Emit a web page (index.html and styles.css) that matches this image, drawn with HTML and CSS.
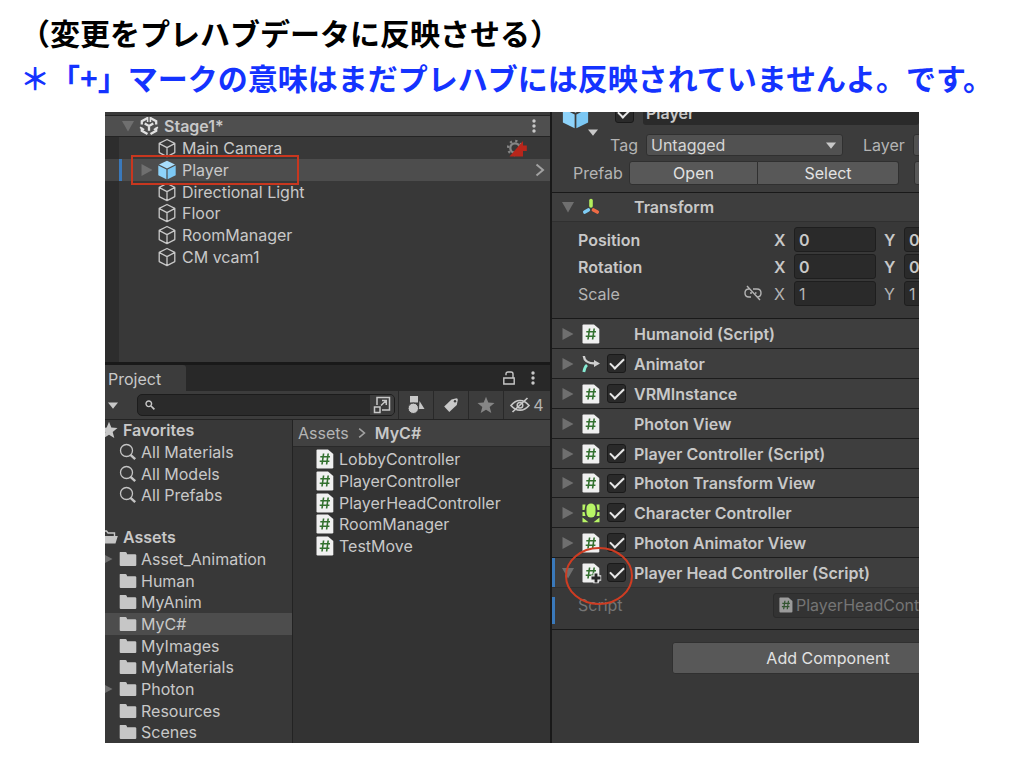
FILE: index.html
```html
<!DOCTYPE html>
<html lang="ja">
<head>
<meta charset="utf-8">
<title>プレハブデータへの反映</title>
<link rel="stylesheet" href="styles.css">
</head>
<body>
<svg class="sprite" aria-hidden="true">
  <symbol id="cube" viewBox="0 0 20 20"><path d="M10 1.5 17.8 5.4V14.6L10 18.6 2.2 14.6V5.4ZM2.4 5.6 10 9.6 17.6 5.6M10 9.6V18.4" fill="none" stroke="#c8c8c8" stroke-width="1.3" stroke-linejoin="round"/></symbol>
  <symbol id="prefab" viewBox="0 0 20 20"><path d="M10 .8 18 4.4 10 8.4 2 4.4Z" fill="#a9defc"/><path d="M1.3 5.6 9.4 9.6V19.2L1.3 15.2Z" fill="#8ed3fa"/><path d="M18.7 5.6 10.6 9.6V19.2L18.7 15.2Z" fill="#7cc8f4"/></symbol>
  <symbol id="down" viewBox="0 0 12 12" preserveAspectRatio="none"><path d="M0 1H12L6 11.5Z" fill="currentColor"/></symbol>
  <symbol id="right" viewBox="0 0 12 12"><path d="M.5 0 11.5 6 .5 12Z" fill="currentColor"/></symbol>
  <symbol id="dots" viewBox="0 0 4 14"><circle cx="2" cy="2" r="1.7" fill="#c8c8c8"/><circle cx="2" cy="7" r="1.7" fill="#c8c8c8"/><circle cx="2" cy="12" r="1.7" fill="#c8c8c8"/></symbol>
  <symbol id="script" viewBox="0 0 18 20"><path d="M1.5.5H12L17.3 5V18.3Q17.3 19.5 16 19.5H1.7Q.5 19.5.5 18.3V1.6Q.5.5 1.5.5Z" fill="#f0f0f0"/><path d="M7.6 4.5 6 15.5M12.2 4.5 10.6 15.5M4.3 7.8H14M3.7 12.2H13.4" stroke="#33712f" stroke-width="1.6" fill="none"/></symbol>
  <symbol id="folder" viewBox="0 0 18 16"><path d="M1 1H6.5Q7.3 1 7.6 1.8L8.2 3.2H16Q17.3 3.2 17.3 4.3V14Q17.3 15 16.3 15H1.8Q.7 15 .7 14V1.5Z" fill="#c6c6c6"/></symbol>
  <symbol id="lens" viewBox="0 0 18 18"><circle cx="7.5" cy="7.5" r="6" fill="none" stroke="#c4c4c4" stroke-width="1.3"/><path d="M11.5 11.8 16.2 16.2" stroke="#c4c4c4" stroke-width="2.4"/></symbol>
  <symbol id="star" viewBox="0 0 18 18"><path d="M9 .8 11.3 6.6 17.5 7 12.7 11 14.3 17 9 13.7 3.7 17 5.3 11 .5 7 6.7 6.6Z" fill="currentColor"/></symbol>
  <symbol id="chevron" viewBox="0 0 10 14"><path d="M1.5 1.5 8 7 1.5 12.5" fill="none" stroke="#a2a2a2" stroke-width="2"/></symbol>
</svg>

<header class="notes">
  <h1 class="note">（変更をプレハブデータに反映させる）</h1>
  <p class="note note-blue">＊「+」マークの意味はまだプレハブには反映されていませんよ。です。</p>
</header>

<main class="editor">
  <div class="left">
    <section class="hierarchy" aria-label="Hierarchy">
      <div class="scene">
        <button class="fold" aria-label="Collapse Stage1"><svg class="i12"><use href="#down"/></svg></button>
        <svg class="i20" viewBox="0 0 20 20"><g fill="none" stroke="#e2e2e2" stroke-width="2.3"><path d="M8.6 2 2.8 5.2V8.5M11.4 2 17.2 5.2V8.5M2.8 11.8V14.8L8.5 18M17.2 11.8V14.8L11.5 18M10 10V14.8M10 10 5.7 7.6M10 10 14.3 7.6"/><path d="M8.6 1V6M11.4 1V6M1 11.2 5.2 13.7M19 11.2 14.8 13.7" stroke-width="1.6"/></g></svg>
        <span class="scene-name">Stage1*</span>
        <button class="menu" aria-label="Scene menu"><svg class="dots"><use href="#dots"/></svg></button>
      </div>
      <ul class="objects">
        <li class="object"><svg class="i20"><use href="#cube"/></svg>Main Camera
          <svg class="gear" viewBox="0 0 21 19"><circle cx="8" cy="9" r="4.7" fill="none" stroke="#858585" stroke-width="2.3"/><circle cx="8" cy="9" r="7" fill="none" stroke="#858585" stroke-width="2.4" stroke-dasharray="2.2 3.3"/><path d="M2.5 17.5 16 2V6.5H19.8V12H16V17.5Z" fill="#b8261b"/></svg></li>
        <li class="object selected"><button class="fold" aria-label="Expand Player"><svg class="i12"><use href="#right"/></svg></button><svg class="i20"><use href="#prefab"/></svg>Player
          <svg class="open"><use href="#chevron"/></svg><span class="callout-box"></span></li>
        <li class="object"><svg class="i20"><use href="#cube"/></svg>Directional Light</li>
        <li class="object"><svg class="i20"><use href="#cube"/></svg>Floor</li>
        <li class="object"><svg class="i20"><use href="#cube"/></svg>RoomManager</li>
        <li class="object"><svg class="i20"><use href="#cube"/></svg>CM vcam1</li>
      </ul>
    </section>

    <section class="project" aria-label="Project">
      <div class="tabs">
        <button class="tab">Project</button>
        <button class="menu lock" aria-label="Lock"><svg class="i14" viewBox="0 0 14 14"><path d="M1.8 7H12.2V13H1.8ZM4 4.2V3Q4 1 6 1H9Q11 1 11 3V7" fill="none" stroke="#c8c8c8" stroke-width="1.4"/></svg></button>
        <button class="menu" aria-label="Project menu"><svg class="dots"><use href="#dots"/></svg></button>
      </div>
      <div class="toolbar">
        <button class="create" aria-label="Create"><svg class="caret"><use href="#down"/></svg></button>
        <div class="search">
          <svg class="i10" viewBox="0 0 10 10"><circle cx="3.8" cy="3.8" r="2.8" fill="none" stroke="#c8c8c8" stroke-width="1.4"/><path d="M6 6 9.4 9.4" stroke="#c8c8c8" stroke-width="1.7"/></svg>
          <input class="search-input" type="text" aria-label="Search project">
          <button class="search-mode" aria-label="Open search"><svg class="i18" viewBox="0 0 18 18"><path d="M4 9V1.5H16.5V14H9M1.5 11H7V16.5H1.5ZM8 9.5 13 4.7M9 4.5H13.3V9" fill="none" stroke="#c8c8c8" stroke-width="1.5"/></svg></button>
        </div>
        <button class="tool" aria-label="Search by type"><svg class="i18" viewBox="0 0 18 18"><path d="M3 0H11V6.5H3ZM12.5 5 17.5 13H12Z" fill="#c8c8c8"/><circle cx="6.3" cy="12.3" r="5.2" fill="#c8c8c8" stroke="#3c3c3c"/></svg></button>
        <button class="tool" aria-label="Search by label"><svg class="i16" viewBox="0 0 16 16"><path d="M8.5 2.5 13.5 1.2Q15 1.2 14.8 3L13.8 8 6.3 15 1.2 9.5Z" fill="#c8c8c8"/><circle cx="12" cy="4.3" r="1.2" fill="#3c3c3c"/></svg></button>
        <button class="tool dim" aria-label="Favorite search"><svg class="i18"><use href="#star"/></svg></button>
        <button class="tool hidden-count"><svg class="eye" viewBox="0 0 20 16"><path d="M1 8.5Q5 3.5 10 3.5T19 8.5Q15 13.2 10 13.2T1 8.5ZM2.5 15 17.5 1" fill="none" stroke="#c8c8c8" stroke-width="1.7"/><circle cx="10" cy="8.3" r="2.8" fill="none" stroke="#c8c8c8" stroke-width="1.5"/></svg>4</button>
      </div>
      <div class="browser">
        <div class="tree-pane">
          <ul class="tree">
            <li class="root"><svg class="i18"><use href="#star"/></svg>Favorites</li>
            <li class="leaf"><svg class="i18"><use href="#lens"/></svg>All Materials</li>
            <li class="leaf"><svg class="i18"><use href="#lens"/></svg>All Models</li>
            <li class="leaf"><svg class="i18"><use href="#lens"/></svg>All Prefabs</li>
          </ul>
          <ul class="tree">
            <li class="root"><svg class="i18" viewBox="0 0 18 16"><path d="M1 13V2H6.5L8 4H14.5V7" fill="none" stroke="#c6c6c6" stroke-width="1.4"/><path d="M3.2 7H17.8L15.5 14.5H.5Z" fill="#c6c6c6"/></svg>Assets</li>
            <li class="leaf"><svg class="branch"><use href="#right"/></svg><svg class="i18"><use href="#folder"/></svg>Asset_Animation</li>
            <li class="leaf"><svg class="i18"><use href="#folder"/></svg>Human</li>
            <li class="leaf"><svg class="i18"><use href="#folder"/></svg>MyAnim</li>
            <li class="leaf current"><svg class="i18"><use href="#folder"/></svg>MyC#</li>
            <li class="leaf"><svg class="i18"><use href="#folder"/></svg>MyImages</li>
            <li class="leaf"><svg class="i18"><use href="#folder"/></svg>MyMaterials</li>
            <li class="leaf"><svg class="branch"><use href="#right"/></svg><svg class="i18"><use href="#folder"/></svg>Photon</li>
            <li class="leaf"><svg class="i18"><use href="#folder"/></svg>Resources</li>
            <li class="leaf"><svg class="i18"><use href="#folder"/></svg>Scenes</li>
          </ul>
        </div>
        <div class="files-pane">
          <nav class="crumbs" aria-label="Path"><a class="crumb" href="#">Assets</a><svg class="crumb-sep"><use href="#chevron"/></svg><b class="crumb-here">MyC#</b></nav>
          <ul class="files">
            <li class="file"><svg class="sc"><use href="#script"/></svg>LobbyController</li>
            <li class="file"><svg class="sc"><use href="#script"/></svg>PlayerController</li>
            <li class="file"><svg class="sc"><use href="#script"/></svg>PlayerHeadController</li>
            <li class="file"><svg class="sc"><use href="#script"/></svg>RoomManager</li>
            <li class="file"><svg class="sc"><use href="#script"/></svg>TestMove</li>
          </ul>
        </div>
      </div>
    </section>
  </div>

  <section class="inspector" aria-label="Inspector">
    <div class="head">
      <div class="name-row">
        <svg class="big-cube"><use href="#prefab"/></svg>
        <input class="check" type="checkbox" checked aria-label="Active">
        <input class="name-input" type="text" value="Player" aria-label="Name">
        <svg class="caret icon-arrow"><use href="#down"/></svg>
      </div>
      <div class="tag-row">
        <label class="tag-label" for="tag">Tag</label>
        <div class="picker"><select class="select" id="tag"><option>Untagged</option></select><svg class="caret picker-arrow"><use href="#down"/></svg></div>
        <label class="layer-label" for="layer">Layer</label>
        <select class="select layer" id="layer"><option>Default</option></select>
      </div>
      <div class="prefab-row">
        <span class="prefab-label">Prefab</span>
        <button class="btn open-btn">Open</button><button class="btn select-btn">Select</button><button class="btn over-btn" aria-label="Overrides"></button>
      </div>
    </div>

    <div class="comp">
      <button class="fold" aria-label="Collapse Transform"><svg class="i12"><use href="#down"/></svg></button>
      <svg class="i18" viewBox="0 0 18 18"><g stroke-width="3.6" stroke-linecap="round"><path d="M9 2.5V8" stroke="#b4ee5c"/><path d="M6.3 12 2.8 14" stroke="#7fcdf5"/><path d="M11.5 12 15.3 14" stroke="#ef6b45"/></g></svg>
      <h2 class="comp-name">Transform</h2>
    </div>
    <div class="transform">
      <div class="vec bold"><span>Position</span><label class="axis" for="px">X</label><input class="num" id="px" value="0"><label class="axis" for="py">Y</label><input class="num" id="py" value="0"></div>
      <div class="vec bold"><span>Rotation</span><label class="axis" for="rx">X</label><input class="num" id="rx" value="0"><label class="axis" for="ry">Y</label><input class="num" id="ry" value="0"></div>
      <div class="vec"><span class="scale-label">Scale<svg class="i18" viewBox="0 0 18 16"><path d="M7 12H5Q1 12 1 8T5 4H6M9 4H13Q17 4 17 8T13 12M6 8H8M11 8H12.5M3 1 16 15" fill="none" stroke="#b4b4b4" stroke-width="1.4"/></svg></span><label class="axis" for="sx">X</label><input class="num" id="sx" value="1"><label class="axis" for="sy">Y</label><input class="num" id="sy" value="1"></div>
    </div>

    <div class="comps">
      <div class="comp"><button class="fold" aria-label="Expand"><svg class="i12"><use href="#right"/></svg></button><svg class="sc"><use href="#script"/></svg><h2 class="comp-name">Humanoid (Script)</h2></div>
      <div class="comp"><button class="fold" aria-label="Expand"><svg class="i12"><use href="#right"/></svg></button><svg class="i18" viewBox="0 0 18 18"><path d="M1.8 1Q2.5 8.5 13 8.5" fill="none" stroke="#cfcfcf" stroke-width="2.4"/><path d="M12 5 18 8.5 12 12Z" fill="#cfcfcf"/><path d="M5 10Q2.5 12 1.8 17" fill="none" stroke="#86ecd4" stroke-width="2.8"/></svg><input class="check" id="c1" type="checkbox" checked><label class="comp-name" for="c1">Animator</label></div>
      <div class="comp"><button class="fold" aria-label="Expand"><svg class="i12"><use href="#right"/></svg></button><svg class="sc"><use href="#script"/></svg><input class="check" id="c2" type="checkbox" checked><label class="comp-name" for="c2">VRMInstance</label></div>
      <div class="comp"><button class="fold" aria-label="Expand"><svg class="i12"><use href="#right"/></svg></button><svg class="sc"><use href="#script"/></svg><h2 class="comp-name">Photon View</h2></div>
      <div class="comp"><button class="fold" aria-label="Expand"><svg class="i12"><use href="#right"/></svg></button><svg class="sc"><use href="#script"/></svg><input class="check" id="c3" type="checkbox" checked><label class="comp-name" for="c3">Player Controller (Script)</label></div>
      <div class="comp"><button class="fold" aria-label="Expand"><svg class="i12"><use href="#right"/></svg></button><svg class="sc"><use href="#script"/></svg><input class="check" id="c4" type="checkbox" checked><label class="comp-name" for="c4">Photon Transform View</label></div>
      <div class="comp"><button class="fold" aria-label="Expand"><svg class="i12"><use href="#right"/></svg></button><svg class="sc" viewBox="0 0 18 20"><rect x="4.5" y=".5" width="9" height="14" rx="4.5" fill="#b8f566"/><path d="M.5 1.5H3.5L2.5 7H.5ZM17.5 1.5H14.5L15.5 7H17.5ZM.5 9H2.5L3.5 13H.5ZM17.5 9H15.5L14.5 13H17.5ZM.5 14.5 6.5 19.3H.5ZM17.5 14.5 11.5 19.3H17.5Z" fill="#b8f566"/></svg><input class="check" id="c5" type="checkbox" checked><label class="comp-name" for="c5">Character Controller</label></div>
      <div class="comp"><button class="fold" aria-label="Expand"><svg class="i12"><use href="#right"/></svg></button><svg class="sc"><use href="#script"/></svg><input class="check" id="c6" type="checkbox" checked><label class="comp-name" for="c6">Photon Animator View</label></div>
      <div class="comp added"><button class="fold" aria-label="Collapse"><svg class="i12"><use href="#down"/></svg></button><svg class="sc"><use href="#script"/></svg><input class="check" id="c7" type="checkbox" checked><label class="comp-name" for="c7">Player Head Controller (Script)</label>
        <svg class="plus" viewBox="0 0 12 12"><path d="M6 .8V11.2M.8 6H11.2" stroke="#e6e6e6" stroke-width="5.4"/><path d="M6 1.5V10.5M1.5 6H10.5" stroke="#262626" stroke-width="2.8"/></svg>
        <svg class="callout-ring" viewBox="0 0 70 60"><ellipse cx="35" cy="30" rx="33" ry="28" fill="none" stroke="#cf3c22" stroke-width="2"/></svg></div>
    </div>
    <div class="script-body">
      <span class="script-label">Script</span>
      <div class="script-field"><svg class="sc-small"><use href="#script"/></svg>PlayerHeadController</div>
    </div>
    <div class="foot"><button class="btn add-btn">Add Component</button></div>
  </section>
</main>
</body>
</html>
```
FILE: styles.css
```css
* { box-sizing: border-box; }
body { margin: 0; background: #fff; font-family: Inter, "Noto Sans", sans-serif; font-size: 16px; color: #c8c8c8; }
ul, h1, h2, p { margin: 0; padding: 0; list-style: none; }
svg { display: block; flex: none; }
button, input, select { font: inherit; color: inherit; border: 0; margin: 0; padding: 0; background: none; }
.sprite { position: absolute; width: 0; height: 0; }

.notes { padding: 10px 20px 12px; }
.note { font: bold 30px/45px "Noto Sans CJK JP", sans-serif; color: #000; white-space: nowrap; }
.note-blue { color: #1433ff; }

.i10 { width: 10px; height: 10px; }
.i12 { width: 12px; height: 12px; }
.i14 { width: 14px; height: 14px; }
.i16 { width: 16px; height: 16px; }
.i18 { width: 18px; height: 18px; }
.i20 { width: 20px; height: 20px; }
.sc { width: 18px; height: 20px; }
.dots { width: 4px; height: 14px; }
.caret { width: 10px; height: 7px; color: #c8c8c8; }
.fold { display: flex; color: #6f6f6f; }
.menu { display: flex; margin-left: auto; }

.editor { display: grid; grid-template-columns: 447fr 367fr; margin: 0 105px 24px; background: #383838; line-height: 20px; overflow: hidden; }
.left { display: flex; flex-direction: column; min-width: 0; border-right: 2px solid #191919; }

/* Hierarchy */
.hierarchy { border-top: 3px solid #3a3a3a; background: linear-gradient(90deg, #2d2d2d 14px, #383838 14px); }
.scene { display: flex; align-items: center; height: 22px; padding: 0 14px 0 17px; gap: 5px; background: #4f4f4f; border: solid #232323; border-width: 1px 0; font-weight: 600; }
.objects { display: grid; grid-auto-rows: 22px 22px 21px; padding-bottom: 95px; }
.object { position: relative; display: flex; align-items: center; gap: 5px; padding-left: 52px; }
.object .fold { margin-left: -16px; margin-right: -1px; }
.selected { background: linear-gradient(90deg, #444 14px, #3a79bb 14px, #3a79bb 17px, #4d4d4d 17px); }
.gear { width: 21px; height: 19px; margin-left: auto; margin-right: 22px; }
.open { width: 10px; height: 14px; margin-left: auto; margin-right: 5px; }
.callout-box { position: absolute; left: 26px; top: -4px; width: 168px; height: 30px; border: 2px solid #c8371f; z-index: 1; }

/* Project */
.project { display: flex; flex-direction: column; flex: 1; border-top: 3px solid #191919; }
.tabs { display: flex; align-items: center; height: 26px; padding-right: 15px; background: #282828; }
.tab { align-self: stretch; width: 81px; padding: 2px 0 0 3px; text-align: left; background: #3c3c3c; border-radius: 0 3px 0 0; }
.lock + .menu { margin-left: 15px; }
.toolbar { display: flex; align-items: center; height: 29px; background: #3c3c3c; border-bottom: 1px solid #232323; }
.create { padding: 0 19px 0 3px; }
.search { display: flex; align-items: center; flex: 1; min-width: 0; height: 22px; padding-left: 7px; background: #2a2a2a; border: 1px solid #1c1c1c; border-radius: 5px; margin-right: 3px; }
.search-input { flex: 1; min-width: 0; }
.search-mode { padding: 1px 3px; background: #3c3c3c; border-radius: 0 4px 4px 0; }
.tool { display: flex; align-items: center; justify-content: center; gap: 3px; width: 35px; height: 28px; border-left: 1px solid #292929; }
.dim { color: #858585; }
.hidden-count { width: 47px; color: #b4b4b4; }
.eye { width: 20px; height: 16px; }
.browser { display: grid; grid-template-columns: 188px 1fr; flex: 1; margin-top: -1px; }
.tree-pane { display: flex; flex-direction: column; gap: 20px; border-right: 1px solid #232323; }
.tree { display: grid; grid-auto-rows: 22px 22px 21px; }
.root, .leaf { position: relative; display: flex; align-items: center; }
.root { gap: 5px; font-weight: 600; margin-left: -5px; }
.leaf { gap: 4px; padding-left: 14px; }
.branch { position: absolute; left: -4px; width: 12px; height: 12px; color: #6f6f6f; }
.current { background: #4d4d4d; }
.files-pane { background: #333; border-top: 1px solid #232323; }
.crumbs { display: flex; align-items: center; gap: 9px; height: 27px; padding-left: 5px; background: #414141; border-bottom: 1px solid #292929; }
.crumb { color: #b4b4b4; text-decoration: none; }
.crumb-sep { width: 8px; height: 12px; }
.crumb-here { font-weight: 600; }
.files { display: grid; grid-auto-rows: 22px 22px 21px; padding-top: 1px; }
.file { display: flex; align-items: center; gap: 5px; padding-left: 23px; }

/* Inspector */
.inspector { min-width: 0; overflow: hidden; white-space: nowrap; }
.head { height: 81px; background: #3c3c3c; border-bottom: 1px solid #191919; overflow: hidden; }
.name-row { position: relative; display: flex; align-items: center; height: 26px; margin-top: -12px; padding-left: 9px; }
.big-cube { width: 29px; height: 34px; margin: 4px 25px 0 0; }
.icon-arrow { position: absolute; left: 36px; bottom: -10px; }
.name-input { flex: 1; min-width: 0; height: 24px; margin-left: 9px; padding-left: 3px; background: #2a2a2a; border-radius: 3px; font-weight: 600; }
.tag-row { display: flex; align-items: center; height: 22px; margin-top: 8px; padding-left: 58px; color: #b4b4b4; }
.tag-label { flex: none; width: 36px; }
.picker { position: relative; flex: none; width: 197px; margin-right: 20px; }
.select { appearance: none; display: block; width: 100%; height: 22px; padding-left: 4px; background: #515151; border: 1px solid #303030; border-radius: 3px; color: #d6d6d6; line-height: 20px; }
.picker-arrow { position: absolute; right: 7px; top: 8px; }
.layer-label { flex: none; width: 50px; }
.layer { flex: none; width: 120px; }
.prefab-row { display: flex; align-items: center; height: 24px; margin-top: 5px; padding-left: 21px; color: #b4b4b4; }
.prefab-label { flex: none; width: 56px; }
.btn { flex: none; height: 24px; background: #585858; border: 1px solid #303030; border-radius: 3px; color: #e2e2e2; }
.open-btn { width: 129px; border-radius: 3px 0 0 3px; }
.select-btn { width: 141px; border-left: 0; border-radius: 0 3px 3px 0; }
.over-btn { width: 120px; margin-left: 15px; }
.comp { position: relative; display: grid; grid-template-columns: 20px 25px 27px 1fr; align-items: center; min-height: 29px; padding-left: 10px; background: #3e3e3e; border-bottom: 1px solid #1c1c1c; }
.head + .comp { border-bottom-color: #303030; }
.comp-name { grid-column: 4; font-size: 16px; font-weight: 600; }
.transform { padding: 4px 0 11px 26px; border-bottom: 1px solid #191919; }
.vec { display: grid; grid-template-columns: 196px 20px 82px 8px 20px 82px; grid-template-rows: 27px; align-items: center; color: #b4b4b4; }
.bold { font-weight: 600; color: #c8c8c8; }
.vec .axis:nth-of-type(2) { grid-column: 5; }
.scale-label { display: flex; justify-content: space-between; padding-right: 12px; }
.num { width: 82px; height: 25px; padding-left: 4px; background: #2a2a2a; border: 1px solid #1e1e1e; border-radius: 3px; }
.comps { display: grid; grid-auto-rows: 30px 30px 30px 30px 30px 29px; }
.check { appearance: none; display: grid; place-items: center; flex: none; width: 19px; height: 19px; background: #2a2a2a; border: 1px solid #1a1a1a; border-radius: 3px; }
.check:checked::before { content: ""; width: 12px; height: 6px; border: solid #e8e8e8; border-width: 0 0 2px 2px; transform: translateY(-2px) rotate(-45deg); }
.added { border-bottom-color: #303030; box-shadow: inset 3px 0 #3a79bb; }
.plus { position: absolute; left: 38px; top: 14px; width: 12px; height: 12px; }
.callout-ring { position: absolute; left: 12px; top: -12px; width: 70px; height: 60px; z-index: 1; pointer-events: none; }
.script-body { display: flex; align-items: center; height: 42px; padding: 0 0 7px 26px; border-bottom: 1px solid #191919; background: linear-gradient(#3a79bb, #3a79bb) 0 9px / 3px 27px no-repeat; color: #757575; }
.script-label { flex: none; width: 195px; }
.script-field { display: flex; align-items: center; flex: none; gap: 3px; width: 220px; height: 25px; padding-left: 5px; background: #333; border: 1px solid #2b2b2b; border-radius: 3px; }
.sc-small { width: 14px; height: 16px; opacity: .55; }
.foot { height: 112px; padding: 12px 0 0 120px; }
.add-btn { width: 312px; height: 32px; }
```
